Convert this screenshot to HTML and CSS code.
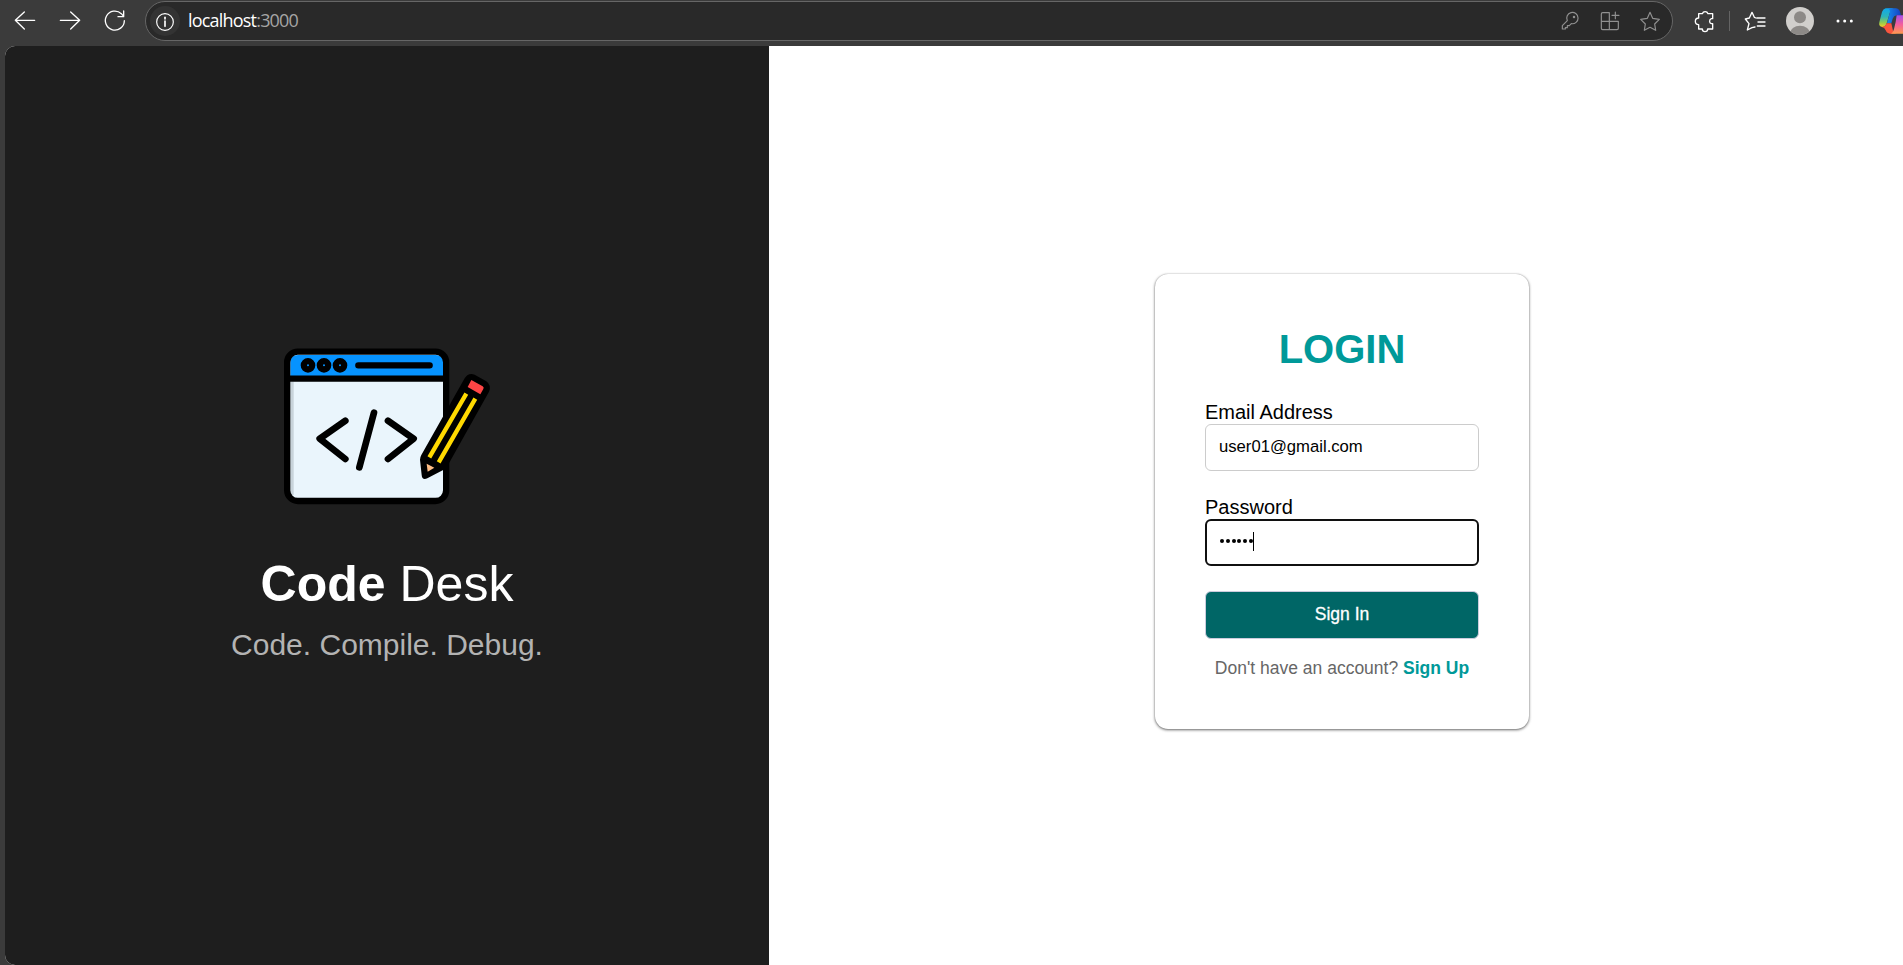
FILE: index.html
```html
<!DOCTYPE html>
<html lang="en">
<head>
<meta charset="utf-8">
<title>Code Desk</title>
<link rel="stylesheet" href="styles.css">
</head>
<body>
<header class="toolbar">
  <svg class="icon back" viewBox="36 24 75 75"><path d="M104 61H46M73 36L46 61L73 87"/></svg>
  <svg class="icon forward" viewBox="171 24 75 75"><path d="M181 61H239M212 36L239 61L212 87"/></svg>
  <svg class="icon reload" viewBox="306 24 75 75"><path d="M373 62A28.500 28.500 0 1 1 364 41L371 49M371 33V50H354"/></svg>
  <div class="address">
    <span class="info"><svg class="icon" viewBox="456 24 75 75"><circle cx="495" cy="63" r="25"/><path d="M495 60V76" stroke-width="5"/><path d="M495 49V54" stroke-width="5"/></svg></span>
    <div class="url"><span class="host">localhost</span><span class="port">:3000</span></div>
    <div class="actions">
      <svg class="icon dim" viewBox="54 24 75 75"><path d="M82 62A17 17 0 1 1 94 71L88 77H82V83H76V87H67V77Z"/><circle cx="102" cy="51" r="2"/></svg>
      <svg class="icon dim" viewBox="174 24 75 75"><path d="M208 38H188Q184 38 184 42V85Q184 89 188 89H231Q235 89 235 85V64H184M208 38V89M226 36V56M216 46H237"/></svg>
      <svg class="icon dim" viewBox="294 24 75 75"><path d="M330 37L338 55L358 58L344 72L347 91L330 82L313 91L316 72L302 58L322 55Z"/></svg>
    </div>
  </div>
  <svg class="icon puzzle" viewBox="456 24 75 75"><path d="M476 41H487A9 9 0 0 1 504 41H518V56H514A8 8 0 0 0 514 71H518V87H503A8 8 0 0 1 487 87H476V74A10 10 0 0 1 476 54Z"/></svg>
  <span class="divider"></span>
  <svg class="icon favorites" viewBox="606 24 75 75"><path d="M648 54L643 52L636 37L628 54L616 57L627 71L622 90L636 83L645 81M651 54H675M654 66H675M652 78H675"/></svg>
  <svg class="avatar" viewBox="735 18 90 90"><defs><clipPath id="face"><circle cx="780" cy="63" r="42"/></clipPath></defs><circle cx="780" cy="63" r="42" fill="#d1cfcc"/><circle cx="780" cy="52" r="18" fill="#8d8a87"/><ellipse cx="780" cy="100" rx="30" ry="23" fill="#8d8a87" clip-path="url(#face)"/></svg>
  <svg class="more" viewBox="876 24 75 75"><g fill="#fff"><circle cx="894" cy="63" r="4.500"/><circle cx="914" cy="63" r="4.500"/><circle cx="934" cy="63" r="4.500"/></g></svg>
  <svg class="copilot" viewBox="1014 24 75 81">
    <defs>
      <linearGradient id="left" x1="0" y1="0" x2="0" y2="1"><stop offset="0" stop-color="#0fa8ec"/><stop offset=".45" stop-color="#2eb5b8"/><stop offset=".75" stop-color="#8ccb54"/><stop offset="1" stop-color="#f5cf26"/></linearGradient>
      <linearGradient id="right" x1="0" y1="0" x2="0" y2="1"><stop offset="0" stop-color="#a64fe8"/><stop offset=".5" stop-color="#f45f9b"/><stop offset="1" stop-color="#ff9a50"/></linearGradient>
      <linearGradient id="top"><stop offset="0" stop-color="#168fee"/><stop offset="1" stop-color="#163fc0"/></linearGradient>
    </defs>
    <path fill="url(#left)" d="M1037 25H1060Q1052 28 1049 40L1040 70Q1036 81 1027 81Q1015 80 1018 67L1026 36Q1029 27 1037 25Z"/>
    <path fill="url(#top)" d="M1040 25H1067Q1077 26 1080 35L1083 46H1070Q1061 47 1058 56L1054 70H1041L1049 40Q1052 27 1040 25Z"/>
    <path fill="#fa553e" d="M1025 81Q1036 81 1040 70H1054L1059 92Q1061 99 1070 101H1050Q1041 101 1037 91Q1034 82 1025 81Z"/>
    <path fill="url(#right)" d="M1070 46H1095V101H1053Q1060 97 1062 87L1067 66Z"/>
  </svg>
</header>
<main class="page">
  <section class="brand">
    <svg class="logo" viewBox="0 0 690 540">
      <rect x="51" y="50" width="478" height="448" rx="34" fill="#eaf5fc"/>
      <path d="M61 130V82Q61 60 84 60H497Q520 60 520 82V130Z" fill="#0693ff"/>
      <path d="M66 140V480" stroke="#c8d3da" stroke-width="10"/>
      <g fill="none" stroke="#000" stroke-linecap="round" stroke-linejoin="round">
        <rect x="51.500" y="50" width="477" height="448" rx="32" stroke-width="19"/>
        <path d="M54 131H526M265 91H479" stroke-width="19"/>
        <g stroke-width="19"><circle cx="114" cy="91" r="12.500"/><circle cx="162" cy="91" r="12.500"/><circle cx="210" cy="91" r="12.500"/></g>
        <path d="M226 257L149 311L226 372M312 233L268 397M354 257L431 311L354 372" stroke-width="20"/>
      </g>
      <path d="M584 130Q595 112 614 119L649 139Q665 151 657 170L531 395Q528 401 521 404L472 430Q456 436 455 420L450 374Q450 367 454 360Z" fill="#000"/>
      <path d="M604 135L638 154Q643 157 640 162L631 178L593 156Z" fill="#ff4545"/>
      <path d="M589 176L478 367M616 191L506 382" stroke="#ffd900" stroke-width="13"/>
      <path d="M470 386L493 398L473 410Z" fill="#ffbd85"/>
    </svg>
    <h1 class="name"><strong>Code</strong> Desk</h1>
    <p class="tagline">Code. Compile. Debug.</p>
  </section>
  <section class="content">
    <form class="card">
      <h2 class="title">LOGIN</h2>
      <label class="label">Email Address</label>
      <div class="field">user01@gmail.com</div>
      <label class="label">Password</label>
      <div class="field focused"><span class="dots"><i></i><i></i><i></i><i></i><i></i><i></i></span><span class="caret"></span></div>
      <button class="submit" type="button">Sign In</button>
      <p class="signup">Don't have an account? <a class="link">Sign Up</a></p>
    </form>
  </section>
</main>
</body>
</html>
```
FILE: styles.css
```css
* { box-sizing: border-box; }
body { margin: 0; height: 965px; overflow: hidden; display: flex; flex-direction: column; background: #3b3b3b; font-family: "Liberation Sans", Arial, sans-serif; }
svg { display: block; flex: none; }
.toolbar { height: 46px; flex: none; display: flex; align-items: flex-start; padding: 8px 0 0 12px; overflow: hidden; }
.icon { width: 25px; height: 25px; fill: none; stroke: #fff; stroke-width: 4; stroke-linecap: round; stroke-linejoin: round; }
.forward, .reload { margin-left: 20px; }
.address { width: 1528px; height: 40px; margin: -7px 0 0 18px; border: 1px solid #666; border-radius: 20px; background: #292929; display: flex; align-items: center; padding: 0 9px 0 4px; }
.info { width: 30px; height: 30px; border-radius: 50%; background: #333; display: flex; align-items: center; justify-content: center; }
.info .icon { margin: 0 2px 0 0; stroke-width: 3.500; }
.url { margin: 0 0 2px 8px; font: 18px/24px "Open Sans", sans-serif; letter-spacing: -.8px; }
.host { color: #fff; }
.port { color: #a5a5a5; }
.actions { margin-left: auto; display: flex; gap: 15px; }
.actions .icon { margin-bottom: 1px; }
.dim { stroke: #909090; stroke-width: 3.500; }
.puzzle { margin-left: 19px; }
.divider { width: 1px; height: 20px; margin: 3px 12px 0; background: #646464; }
.avatar { width: 30px; height: 30px; margin: -2px 0 0 18px; }
.more { width: 25px; height: 25px; margin-left: 17px; }
.copilot { width: 25px; height: 27px; margin-left: 21px; }
.page { flex: 1; margin-left: 5px; display: flex; border-radius: 10px 0 0 10px; overflow: hidden; background: #fff; }
.brand { width: 764px; background: #1e1e1e; display: flex; flex-direction: column; align-items: center; padding-top: 289px; }
.logo { width: 230px; height: 180px; margin-left: -4px; }
.name { margin: 40px 0 0; font-size: 50px; line-height: 58px; font-weight: 400; color: #fff; }
.tagline { margin: 15px 0 0; font-size: 30px; line-height: 34px; color: #b3b3b3; }
.content { flex: 1; display: flex; justify-content: center; align-items: flex-start; padding: 228px 0 0 12px; }
.card { width: 374px; height: 455px; padding: 52px 50px 0; border-radius: 13px; background: #fff; box-shadow: 0 1px 3px rgba(0,0,0,.6), 0 0 1px rgba(0,0,0,.3); }
.title { margin: 0 0 29px; font-size: 40px; line-height: 46px; text-align: center; color: #009999; }
.label { display: block; padding-bottom: 1px; font-size: 20px; line-height: 22px; }
.field { height: 47px; border: 1px solid #ccc; border-radius: 6px; padding: 0 13px; margin-bottom: 25px; font-size: 16.670px; line-height: 43px; display: flex; }
.focused { border: 2px solid #101010; padding: 11px 12px; align-items: flex-start; }
.dots { display: flex; gap: 1.830px; padding: 7px 0 0 1px; }
.dots i { width: 4px; height: 4px; border-radius: 50%; background: #000; }
.caret { width: 1px; height: 19px; background: #000; }
.submit { display: block; width: 100%; height: 48px; padding: 0 0 2px; border: 1px solid #ccd; border-radius: 6px; background: #006666; color: #fff; font: 500 17.500px/20px "Liberation Sans", Arial, sans-serif; -webkit-text-stroke: .3px #fff; }
.signup { margin: 19px -10px 0; text-align: center; white-space: nowrap; font-size: 17.500px; line-height: 20px; color: #666; }
.link { font-weight: 700; color: #009999; }
```
